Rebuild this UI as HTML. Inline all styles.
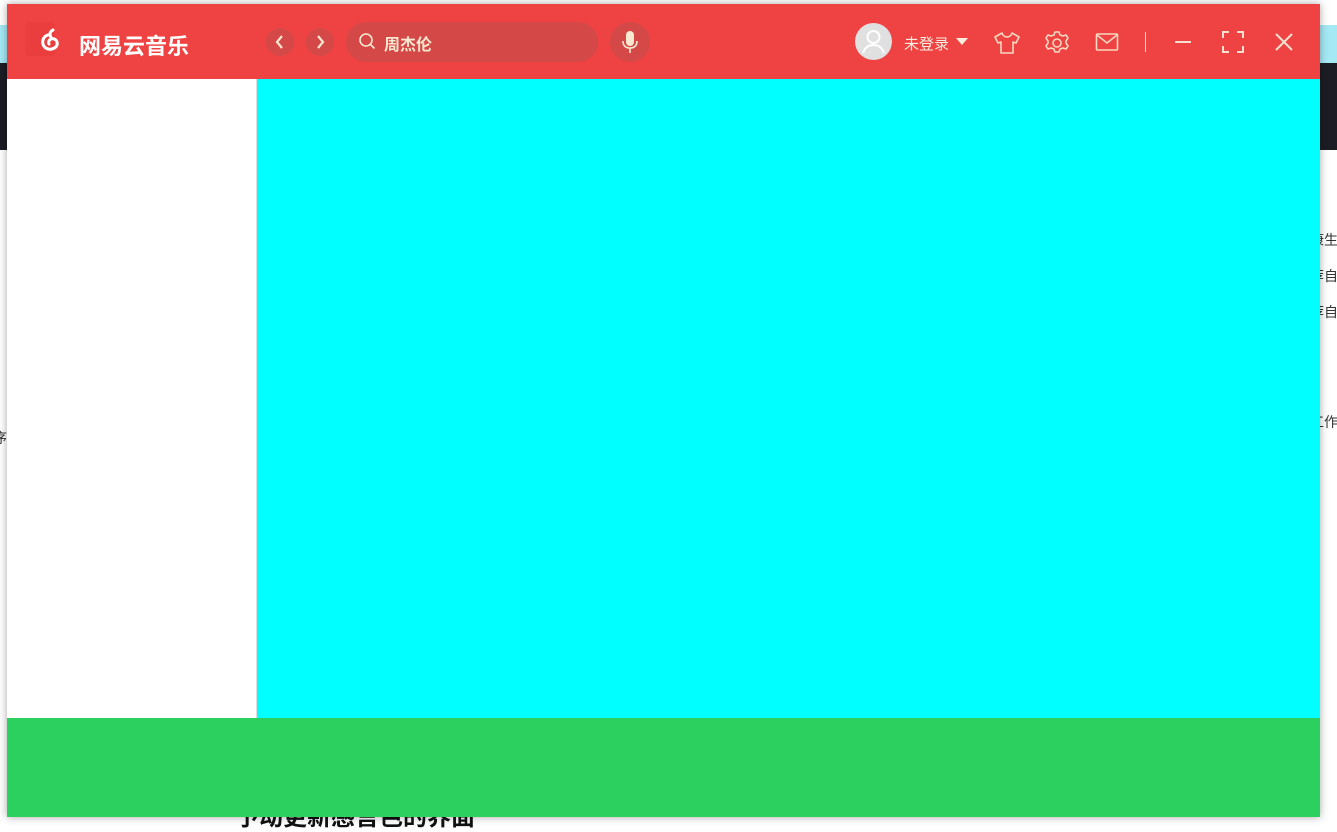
<!DOCTYPE html>
<html><head><meta charset="utf-8"><style>
*{margin:0;padding:0;box-sizing:border-box}
body{width:1337px;height:827px;position:relative;overflow:hidden;background:#fff;font-family:"Liberation Sans","Noto Sans CJK SC",sans-serif}
.abs{position:absolute;white-space:nowrap}
.win{left:7px;top:4px;width:1313px;height:813px;box-shadow:0 0 8px rgba(0,0,0,.35)}
.hdr{left:0;top:0;width:1313px;height:75px;background:#ef4343}
.side{left:0;top:75px;width:250px;height:639px;background:#fff;border-right:1px solid #ddd}
.main{left:250px;top:75px;width:1063px;height:639px;background:#00ffff}
.foot{left:0;top:714px;width:1313px;height:99px;background:#2bd05f}
.c{border-radius:50%;background:rgba(180,80,80,.45)}
svg{position:absolute}
</style></head><body>
<div class="abs" style="left:0;top:25px;width:1337px;height:38px;background:#a5e9f5"></div>
<div class="abs" style="left:0;top:63px;width:1337px;height:87px;background:#1c1c24"></div>
<div class="abs" style="left:1310px;top:222px;font-size:14px;color:#333;line-height:36px">康生<br>荐自<br>荐自</div>
<div class="abs" style="left:1310px;top:412px;font-size:14px;color:#333">工作</div>
<div class="abs" style="left:-7px;top:428px;font-size:14px;color:#333">序</div>
<div class="abs" style="left:235px;top:797px;font-size:24px;font-weight:bold;color:#111">予动更新感言色的界面</div>
<div class="abs win">
<div class="abs hdr">
 <div class="abs" style="left:18px;top:18px;width:30px;height:34px;background:#ea3e3e;border-radius:3px"></div>
 <svg style="left:29px;top:22px" width="30" height="30" viewBox="0 0 30 30"><path d="M17 4c-2 1-3 2-3 4 0 1 1 3 1 5M12 9c-4 1-6 5-5 9 1 4 5 6 9 5 4-1 6-4 5-7-1-3-4-4-6-3-2 1-3 3-2 5" fill="none" stroke="#fff" stroke-width="3" stroke-linecap="round"/></svg>
 <div class="abs" style="left:72px;top:25px;font-size:22px;color:#fff;font-weight:bold">网易云音乐</div>
 <div class="abs c" style="left:259px;top:24px;width:28px;height:28px"></div>
 <div class="abs c" style="left:299px;top:24px;width:28px;height:28px"></div>
 <svg style="left:259px;top:24px" width="28" height="28"><path d="M16 8l-5 6 5 6" fill="none" stroke="#f8e8d0" stroke-width="2.2"/></svg>
 <svg style="left:299px;top:24px" width="28" height="28"><path d="M12 8l5 6-5 6" fill="none" stroke="#f8e8d0" stroke-width="2.2"/></svg>
 <div class="abs" style="left:339px;top:18px;width:252px;height:40px;border-radius:20px;background:rgba(180,80,80,.45)"></div>
 <svg style="left:351px;top:28px" width="20" height="20"><circle cx="8" cy="8" r="6" fill="none" stroke="#f8e8d0" stroke-width="1.6"/><path d="M12.5 12.5l4 4" stroke="#f8e8d0" stroke-width="1.6"/></svg>
 <div class="abs" style="left:377px;top:27px;font-size:16px;color:#f8e8d0;font-weight:bold">周杰伦</div>
 <div class="abs c" style="left:603px;top:18px;width:40px;height:40px"></div>
 <svg style="left:603px;top:18px" width="40" height="40"><rect x="16" y="9" width="8" height="15" rx="4" fill="#f8e8d0"/><path d="M13 19c0 5 3 7 7 7s7-2 7-7M20 26v5" fill="none" stroke="#f8e8d0" stroke-width="1.6"/></svg>
 <div class="abs" style="left:848px;top:19px;width:37px;height:37px;border-radius:50%;background:#e0e0e0"></div>
 <svg style="left:848px;top:19px" width="37" height="37"><circle cx="18.5" cy="14" r="6" fill="none" stroke="#fff" stroke-width="2"/><path d="M8 30c2-6 6-8 10.5-8s8.5 2 10.5 8" fill="none" stroke="#fff" stroke-width="2"/></svg>
 <div class="abs" style="left:897px;top:29px;font-size:15px;color:#fbeee0">未登录</div>
 <svg style="left:948px;top:33px" width="14" height="10"><path d="M1 1h12l-6 7z" fill="#fbeee0"/></svg>
 <svg style="left:986px;top:26px" width="28" height="26"><path d="M9 3l-7 4 3 6 3-1v11h12V12l3 1 3-6-7-4c-1 3-3 4-5 4s-4-1-5-4z" fill="none" stroke="#f8d8c0" stroke-width="1.6" stroke-linejoin="round"/></svg>
 <svg style="left:1037px;top:26px" width="26" height="26"><circle cx="13" cy="13" r="4" fill="none" stroke="#f8d8c0" stroke-width="1.6"/><path d="M11 2h4l1 3 3 1 3-1 2 3-2 3v2l2 3-2 3-3-1-3 1-1 3h-4l-1-3-3-1-3 1-2-3 2-3v-2L2 8l2-3 3 1 3-1z" fill="none" stroke="#f8d8c0" stroke-width="1.6" stroke-linejoin="round"/></svg>
 <svg style="left:1088px;top:28px" width="24" height="22"><rect x="1.5" y="2" width="21" height="16" rx="1" fill="none" stroke="#f8d8c0" stroke-width="1.6"/><path d="M2 3l10 8 10-8" fill="none" stroke="#f8d8c0" stroke-width="1.6"/></svg>
 <div class="abs" style="left:1138px;top:28px;width:1px;height:20px;background:#f8e0d0"></div>
 <div class="abs" style="left:1168px;top:37px;width:16px;height:2px;background:#f8e0d0"></div>
 <svg style="left:1215px;top:27px" width="22" height="22"><path d="M1 7V1h6M15 1h6v6M21 15v6h-6M7 21H1v-6" fill="none" stroke="#f8e0d0" stroke-width="2"/></svg>
 <svg style="left:1267px;top:28px" width="20" height="20"><path d="M2 2l16 16M18 2L2 18" stroke="#f8e0d0" stroke-width="2"/></svg>
</div>
<div class="abs side"></div>
<div class="abs main"></div>
<div class="abs foot"></div>
</div>
</body></html>
